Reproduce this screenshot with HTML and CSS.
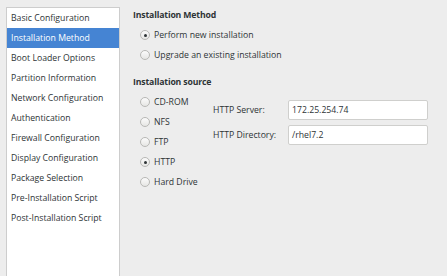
FILE: index.html
```html
<!DOCTYPE html>
<html>
<head>
<meta charset="utf-8">
<link rel="stylesheet" href="styles.css">
</head>
<body>
<div class="app">
  <ul class="sidebar">
    <li class="item">Basic Configuration</li>
    <li class="item selected">Installation Method</li>
    <li class="item">Boot Loader Options</li>
    <li class="item">Partition Information</li>
    <li class="item">Network Configuration</li>
    <li class="item">Authentication</li>
    <li class="item">Firewall Configuration</li>
    <li class="item">Display Configuration</li>
    <li class="item">Package Selection</li>
    <li class="item">Pre-Installation Script</li>
    <li class="item">Post-Installation Script</li>
  </ul>
  <div class="content">
    <div class="heading">Installation Method</div>
    <div class="radios">
      <div class="radio-row"><span class="radio checked"></span><span>Perform new installation</span></div>
      <div class="radio-row"><span class="radio"></span><span>Upgrade an existing installation</span></div>
    </div>
    <div class="heading second">Installation source</div>
    <div class="source">
      <div class="radios source-list">
        <div class="radio-row"><span class="radio"></span><span>CD-ROM</span></div>
        <div class="radio-row"><span class="radio"></span><span>NFS</span></div>
        <div class="radio-row"><span class="radio"></span><span>FTP</span></div>
        <div class="radio-row"><span class="radio checked"></span><span>HTTP</span></div>
        <div class="radio-row"><span class="radio"></span><span>Hard Drive</span></div>
      </div>
      <div class="fields">
        <label class="field-label">HTTP Server:</label>
        <div class="input">172.25.254.74</div>
        <label class="field-label">HTTP Directory:</label>
        <div class="input">/rhel7.2</div>
      </div>
    </div>
  </div>
</div>
</body>
</html>
```
FILE: styles.css
```css
html, body {
  margin: 0;
  padding: 0;
  background: #ededed;
  overflow: hidden;
}
body {
  width: 447px;
  height: 276px;
  font-family: "Open Sans", "DejaVu Sans", sans-serif;
  font-size: 8.7px;
  color: #2e3436;
}
.app {
  display: flex;
  align-items: flex-start;
  height: 276px;
  overflow: hidden;
  padding: 7px 0 0 6px;
  box-sizing: border-box;
}
.sidebar {
  list-style: none;
  margin: 0;
  padding: 0;
  width: 112px;
  height: 300px;
  background: #ffffff;
  border: 1px solid #cdcdcd;
  box-sizing: content-box;
  flex: none;
}
.item {
  height: 20px;
  line-height: 20px;
  padding-left: 4px;
  white-space: nowrap;
}
.item.selected {
  background: #4584d3;
  color: #ffffff;
}
.content {
  margin-left: 13px;
  margin-top: -2px;
  display: flex;
  flex-direction: column;
}
.heading {
  height: 20px;
  line-height: 20px;
  font-weight: bold;
  letter-spacing: -0.15px;
}
.heading.second {
  margin-top: 7px;
}
.radios {
  display: flex;
  flex-direction: column;
  padding-left: 7px;
}
.radio-row {
  display: flex;
  align-items: center;
  height: 20px;
  gap: 4px;
}
.radio {
  width: 8px;
  height: 8px;
  border-radius: 50%;
  border: 1px solid #b8b8b5;
  background: linear-gradient(#fbfbfb, #e6e6e4);
  position: relative;
  flex: none;
}
.radio.checked::after {
  content: "";
  position: absolute;
  left: 2.5px;
  top: 2.5px;
  width: 3px;
  height: 3px;
  border-radius: 50%;
  background: #2e3436;
}
.source {
  display: flex;
  align-items: flex-start;
}
.source-list {
  width: 73px;
}
.fields {
  margin-top: 8px;
  display: grid;
  grid-template-columns: 75px 140px;
  row-gap: 5px;
  align-items: center;
}
.field-label {
  white-space: nowrap;
}
.input {
  height: 18px;
  line-height: 18px;
  border: 1px solid #cfcfcd;
  border-radius: 2px;
  background: #ffffff;
  padding-left: 3px;
}
```
